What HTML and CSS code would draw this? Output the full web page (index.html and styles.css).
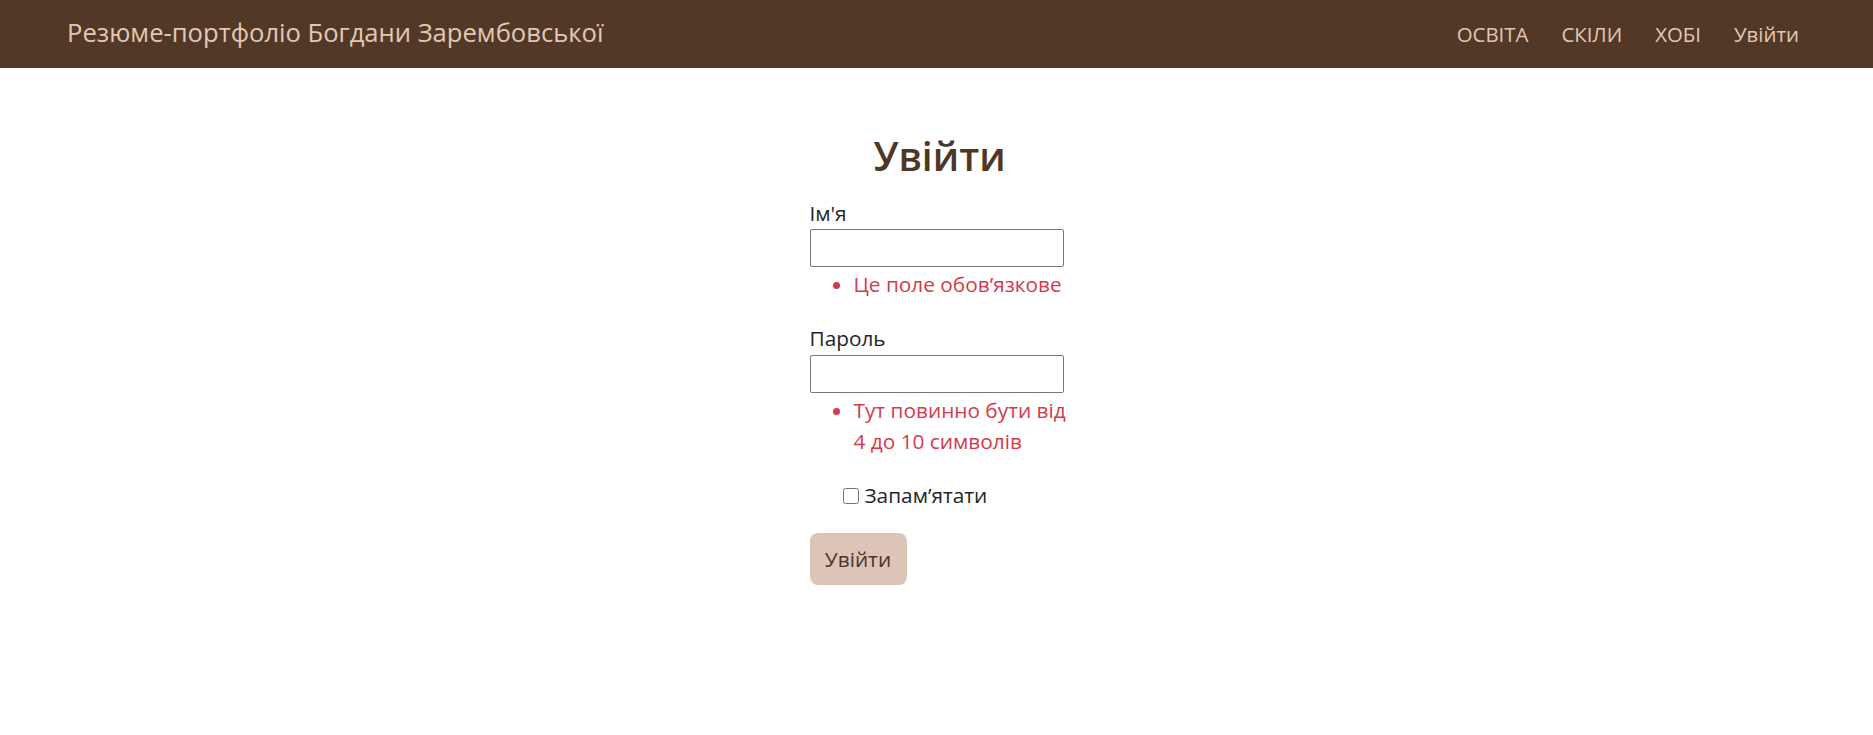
FILE: index.html
```html
<!DOCTYPE html>
<html lang="uk">
<head>
<meta charset="utf-8">
<title>Увійти</title>
<link rel="stylesheet" href="styles.css">
</head>
<body>
<nav class="navbar">
  <a class="brand" href="#">Резюме-портфоліо Богдани Зарембовської</a>
  <ul class="nav-links">
    <li><a href="#">ОСВІТА</a></li>
    <li><a href="#">СКІЛИ</a></li>
    <li><a href="#">ХОБІ</a></li>
    <li><a href="#">Увійти</a></li>
  </ul>
</nav>
<main class="page">
  <form class="login">
    <h1 class="title">Увійти</h1>
    <div class="field">
      <label class="label" for="name">Ім'я</label>
      <input class="input" id="name" type="text">
      <ul class="errors"><li>Це поле обов’язкове</li></ul>
    </div>
    <div class="field">
      <label class="label" for="pass">Пароль</label>
      <input class="input" id="pass" type="password">
      <ul class="errors"><li>Тут повинно бути від 4 до 10 символів</li></ul>
    </div>
    <label class="check"><input type="checkbox" class="checkbox"> Запам’ятати</label>
    <button class="btn" type="button">Увійти</button>
  </form>
</main>
</body>
</html>
```

FILE: styles.css
```css
* { box-sizing: border-box; }
body {
  margin: 0;
  font-family: "Open Sans", "Noto Sans", sans-serif;
  font-size: 20.8px;
  line-height: 1.5;
  color: #212529;
  background: #fff;
}
a { text-decoration: none; }

.navbar {
  height: 68px;
  background: #523827;
  display: flex;
  align-items: center;
  justify-content: space-between;
  padding: 0 58px 0 67px;
}
.brand {
  color: #e2c8b3;
  font-size: 25.6px;
  line-height: 1.4;
  margin-top: -2px;
}
.nav-links {
  list-style: none;
  margin: 0;
  padding: 0;
  display: flex;
}
.nav-links a {
  display: block;
  padding: 0 16.5px;
  color: #e2c8b3;
  font-size: 20.4px;
}
.nav-links li:last-child a { padding-right: 16px; }

.page { padding-top: 64px; }
.login {
  width: 254px;
  margin: 0 auto;
}
.title {
  margin: 0 0 18px;
  text-align: center;
  font-size: 39px;
  font-weight: 600;
  line-height: 48px;
  color: #4f3625;
  padding-left: 6px;
}
.field { margin-bottom: 23px; }
.label { display: block; }
.input {
  display: block;
  width: 254px;
  height: 38px;
  border: 1px solid #767676;
  border-radius: 2px;
  font: inherit;
  margin: 0;
}
.errors {
  margin: 2px -12px 0 0;
  padding-left: 44px;
  color: #d6394a;
}
.check {
  display: flex;
  align-items: center;
  gap: 6px;
  margin-left: 33px;
}
.checkbox {
  width: 16px;
  height: 16px;
  margin: 0;
}
.btn {
  margin-top: 22px;
  height: 52px;
  width: 97px;
  background: #dcc5b7;
  color: #4a3527;
  border: 0;
  border-radius: 8px;
  font: inherit;
  padding: 0;
}
```
